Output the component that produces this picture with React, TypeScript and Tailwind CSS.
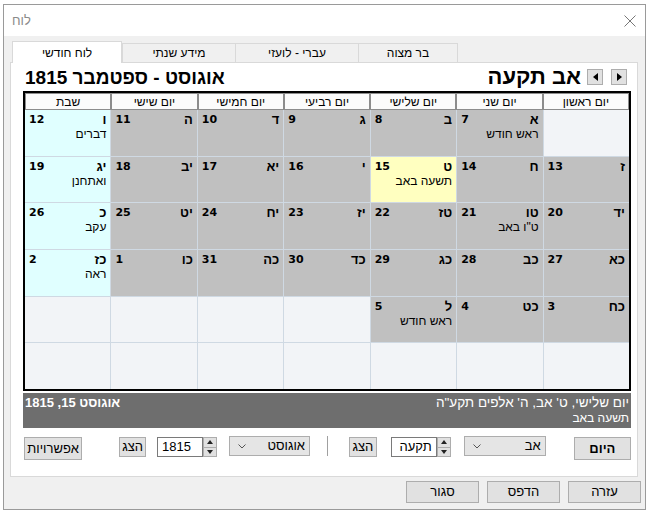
import React from "react";

type Kind = "m" | "s" | "t" | "e";
type Day = { h?: string; g?: number; n?: string; k: Kind };

const HEAD = ["יום ראשון", "יום שני", "יום שלישי", "יום רביעי", "יום חמישי", "יום שישי", "שבת"];

// rows are listed Sunday first; the grid is rtl so Sunday sits on the right
const ROWS: Day[][] = [
  [
    { k: "e" },
    { h: "א", g: 7, n: "ראש חודש", k: "m" },
    { h: "ב", g: 8, k: "m" },
    { h: "ג", g: 9, k: "m" },
    { h: "ד", g: 10, k: "m" },
    { h: "ה", g: 11, k: "m" },
    { h: "ו", g: 12, n: "דברים", k: "s" },
  ],
  [
    { h: "ז", g: 13, k: "m" },
    { h: "ח", g: 14, k: "m" },
    { h: "ט", g: 15, n: "תשעה באב", k: "t" },
    { h: "י", g: 16, k: "m" },
    { h: "יא", g: 17, k: "m" },
    { h: "יב", g: 18, k: "m" },
    { h: "יג", g: 19, n: "ואתחנן", k: "s" },
  ],
  [
    { h: "יד", g: 20, k: "m" },
    { h: "טו", g: 21, n: "ט\"ו באב", k: "m" },
    { h: "טז", g: 22, k: "m" },
    { h: "יז", g: 23, k: "m" },
    { h: "יח", g: 24, k: "m" },
    { h: "יט", g: 25, k: "m" },
    { h: "כ", g: 26, n: "עקב", k: "s" },
  ],
  [
    { h: "כא", g: 27, k: "m" },
    { h: "כב", g: 28, k: "m" },
    { h: "כג", g: 29, k: "m" },
    { h: "כד", g: 30, k: "m" },
    { h: "כה", g: 31, k: "m" },
    { h: "כו", g: 1, k: "m" },
    { h: "כז", g: 2, n: "ראה", k: "s" },
  ],
  [
    { h: "כח", g: 3, k: "m" },
    { h: "כט", g: 4, k: "m" },
    { h: "ל", g: 5, n: "ראש חודש", k: "m" },
    { k: "e" },
    { k: "e" },
    { k: "e" },
    { k: "e" },
  ],
  [{ k: "e" }, { k: "e" }, { k: "e" }, { k: "e" }, { k: "e" }, { k: "e" }, { k: "e" }],
];

const BG: Record<Kind, string> = {
  m: "bg-[#c0c0c0]",
  s: "bg-[#e0ffff]",
  t: "bg-[#ffffc0]",
  e: "bg-[#f2f4f7]",
};

function DayCell({ d }: { d: Day }) {
  return (
    <div className={`${BG[d.k]} flex flex-col px-[4px] pt-[2px]`}>
      {d.h && (
        <div className="flex h-[15px] items-center justify-between text-black">
          <span className="text-[13px] font-bold leading-none">{d.h}</span>
          <span className="font-['DejaVu_Sans',sans-serif] text-[11px] font-bold leading-none">{d.g}</span>
        </div>
      )}
      {d.n && <div className="text-[12px] leading-[14px] text-black">{d.n}</div>}
    </div>
  );
}

function Chevron() {
  return (
    <svg width="8" height="5" viewBox="0 0 8 5">
      <path d="M0.5 0.5L4 4L7.5 0.5" fill="none" stroke="#555" strokeWidth="1" />
    </svg>
  );
}

function Select({ label, w }: { label: string; w: string }) {
  return (
    <div className={`${w} flex h-[20px] items-center justify-between border border-[#adadad] bg-[#e5e5e5] pl-[8px] pr-[4px]`}>
      <Chevron />
      <span className="text-[13px] text-black">{label}</span>
    </div>
  );
}

function Spinner({ value, right }: { value: string; right?: boolean }) {
  return (
    <div className="flex h-[20px] items-stretch">
      <div className={`flex w-[46px] items-center border border-[#7a7a7a] bg-white px-[4px] text-[13px] text-black ${right ? "justify-end" : "justify-start"}`}>
        {value}
      </div>
      <div className="flex w-[14px] flex-col">
        <div className="flex flex-1 items-center justify-center border border-[#adadad] bg-[#e1e1e1]">
          <svg width="6" height="4" viewBox="0 0 6 4"><polygon points="3,0 6,4 0,4" fill="#222" /></svg>
        </div>
        <div className="-mt-px flex flex-1 items-center justify-center border border-[#adadad] bg-[#e1e1e1]">
          <svg width="6" height="4" viewBox="0 0 6 4"><polygon points="0,0 6,0 3,4" fill="#222" /></svg>
        </div>
      </div>
    </div>
  );
}

function Btn({ label, className }: { label: string; className: string }) {
  return (
    <div className={`flex items-center justify-center border border-[#adadad] bg-[#e1e1e1] text-black ${className}`}>
      {label}
    </div>
  );
}

export default function App() {
  return (
    <div className="flex h-[511px] w-[650px] flex-col overflow-hidden bg-white pt-[4px] font-['Liberation_Sans','DejaVu_Sans',sans-serif]">
      <div className="ml-[3px] flex h-[506px] w-[643px] flex-col border border-[#9a9a9a]">
        {/* Title bar */}
        <div className="flex h-[31px] items-center justify-between bg-white pl-[8px] pr-[9px]">
          <span className="text-[13px] text-[#8a8a8a]">לוח</span>
          <svg width="12" height="12" viewBox="0 0 12 12">
            <path d="M0.5 0.5L11.5 11.5M11.5 0.5L0.5 11.5" stroke="#777" strokeWidth="1" />
          </svg>
        </div>

        <div className="flex flex-1 flex-col bg-[#f0f0f0] pl-[6px] pr-[7px] pt-[5px]">
          {/* Tabs */}
          <div className="relative z-10 -mb-px flex h-[22px] items-end pl-[2px] text-[12px] text-black">
            <div className="flex h-[22px] w-[110px] items-center justify-center border border-b-0 border-[#d9d9d9] bg-white">לוח חודשי</div>
            <div className="flex h-[20px] w-[114px] items-center justify-center border border-[#d9d9d9] bg-[#f0f0f0]">מידע שנתי</div>
            <div className="-ml-px flex h-[20px] w-[124px] items-center justify-center border border-[#d9d9d9] bg-[#f0f0f0]">עברי - לועזי</div>
            <div className="-ml-px flex h-[20px] w-[100px] items-center justify-center border border-[#d9d9d9] bg-[#f0f0f0]">בר מצוה</div>
          </div>

          {/* Panel */}
          <div className="flex h-[415px] flex-col border border-[#d9d9d9] bg-white pl-[12px] pr-[6px]">
            <div className="flex h-[28px] items-center justify-between">
              <span className="pl-[2px] text-[19px] font-bold leading-none text-black">אוגוסט - ספטמבר 1815</span>
              <div className="flex items-center pr-[4px]">
                <span className="text-[22px] font-bold leading-none text-black">אב תקעה</span>
                <div className="ml-[6px] flex h-[16px] w-[16px] items-center justify-center border border-[#adadad] bg-[#e1e1e1]">
                  <svg width="5" height="8" viewBox="0 0 5 8"><polygon points="5,0 5,8 0,4" fill="#000" /></svg>
                </div>
                <div className="ml-[8px] flex h-[16px] w-[16px] items-center justify-center border border-[#adadad] bg-[#e1e1e1]">
                  <svg width="5" height="8" viewBox="0 0 5 8"><polygon points="0,0 0,8 5,4" fill="#000" /></svg>
                </div>
              </div>
            </div>

            {/* Month grid */}
            <div dir="rtl" className="flex h-[300px] flex-col border-2 border-black">
              <div className="grid h-[17px] grid-cols-7">
                {HEAD.map((h) => (
                  <div key={h} className="flex items-center justify-center border border-[#8c8c8c] bg-[#fbfbfb] text-[12px] leading-none text-black">
                    {h}
                  </div>
                ))}
              </div>
              <div className="grid flex-1 grid-cols-7 grid-rows-6 gap-px bg-[#cfd9e3]">
                {ROWS.flat().map((d, i) => (
                  <DayCell key={i} d={d} />
                ))}
              </div>
            </div>

            {/* Status bar */}
            <div dir="rtl" className="mt-[2px] flex h-[35px] flex-col justify-center bg-[#6e6e6e] px-[2px] text-white">
              <div className="flex items-center justify-between">
                <span className="text-[13.5px] leading-[16px]">יום שלישי, ט' אב, ה' אלפים תקע"ה</span>
                <span className="text-[13px] font-bold leading-[16px]">אוגוסט 15, 1815</span>
              </div>
              <div className="text-[12px] leading-[15px]">תשעה באב</div>
            </div>

            {/* Controls */}
            <div className="mt-[8px] flex h-[24px] items-start pl-[1px]">
              <Btn label="אפשרויות" className="mt-[1px] h-[23px] w-[59px] text-[13px]" />
              <Btn label="הצג" className="ml-[37px] mt-[1px] h-[20px] w-[27px] text-[13px]" />
              <div className="ml-[11px] mt-[1px]"><Spinner value="1815" /></div>
              <div className="ml-[12px]"><Select label="אוגוסט" w="w-[81px]" /></div>
              <div className="ml-[17px] h-[20px] w-px bg-[#a0a0a0]" />
              <Btn label="הצג" className="ml-[21px] mt-[1px] h-[20px] w-[28px] text-[13px]" />
              <div className="ml-[14px] mt-[1px]"><Spinner value="תקעה" right /></div>
              <div className="ml-[13px]"><Select label="אב" w="w-[82px]" /></div>
              <Btn label="היום" className="ml-[28px] mt-[1px] h-[23px] w-[58px] text-[13px] font-bold" />
            </div>
          </div>

          {/* Dialog buttons */}
          <div className="-mr-[3px] mt-[4px] flex justify-end gap-[8px]">
            <Btn label="סגור" className="h-[22px] w-[73px] text-[13px]" />
            <Btn label="הדפס" className="h-[22px] w-[73px] text-[13px]" />
            <Btn label="עזרה" className="h-[22px] w-[73px] text-[13px]" />
          </div>
        </div>
      </div>
    </div>
  );
}
